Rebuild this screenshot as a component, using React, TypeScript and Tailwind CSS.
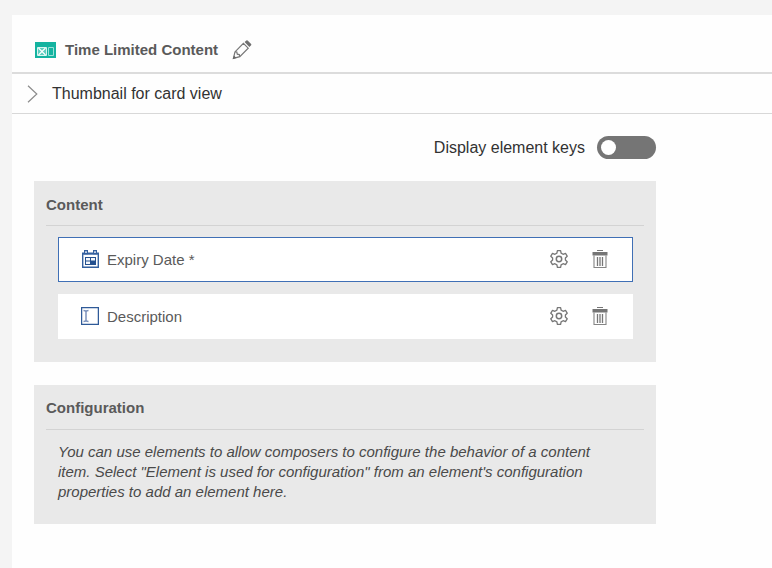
import { useState } from "react";

function CardTypeIcon() {
  return (
    <svg width="21" height="16" viewBox="0 0 21 16" aria-hidden="true">
      <rect width="21" height="16" fill="#14b3a0" />
      <path d="M2.5 5.5h9v8h-9z" fill="#5fcdbf" stroke="#d9f5f0" />
      <path d="m3.5 6 7 7M10.5 6l-7 7" fill="none" stroke="#fff" strokeWidth="1.1" />
      <path d="M13.5 5.5h5v8h-5z" fill="none" stroke="#9be0d7" />
    </svg>
  );
}

function PencilIcon() {
  return (
    <svg width="20" height="20" viewBox="0 0 20 20" fill="none" stroke="#777" aria-hidden="true">
      <path d="M3 11.8 11.4 3.4l4.8 4.8-8.4 8.4L1.4 18.4zM3 11.8l1.8.2.5 2.2 2 .4.5 2" strokeWidth="1.2" />
      <path d="m.8 19 1.2-3.6L4.4 18z" fill="#666" stroke="none" />
      <path d="M12.6 2 14.4.4q.6-.5 1.2.1l3.5 3.5q.5.6 0 1.2L17.4 7z" fill="#6f6f6f" stroke="none" />
    </svg>
  );
}

function ChevronIcon() {
  return (
    <svg width="11" height="18" viewBox="0 0 11 18" fill="none" stroke="#8c8c8c" strokeWidth="1.2" aria-hidden="true">
      <path d="m1 .7 8.8 8.3L1 17.3" />
    </svg>
  );
}

function CalendarIcon() {
  return (
    <svg width="18" height="18" viewBox="0 0 18 18" fill="none" aria-hidden="true">
      <path d="M1.7 3v14.3h15.6V3" stroke="#34609f" strokeWidth="1.4" />
      <path d="M1 2.5h17v2.2H1z" fill="#34609f" />
      <path d="M3.6.6h2.8v3H3.6zM12.6.6h2.8v3h-2.8z" fill="#e8eef8" stroke="#34609f" strokeWidth="1.2" />
      <path d="M4 7h11v8H4z" fill="#24508f" />
      <path d="M5 8h4v2.5H5zM10 8h4v2.5h-4zM5 11.5h4V14H5z" fill="#f4f7fc" />
    </svg>
  );
}

function TextFieldIcon() {
  return (
    <svg width="18" height="18" viewBox="0 0 18 18" fill="none" aria-hidden="true">
      <path d="M.6.6h16.8v16.8H.6z" stroke="#2f5a98" strokeWidth="1.3" />
      <path d="M2.5 3.5q2.5 0 2.5 1.5 0-1.5 2.5-1.5M5 4.5v9M2.5 14.5q2.5 0 2.5-1.5 0 1.5 2.5 1.5" stroke="#7d93bd" strokeWidth="1.5" />
    </svg>
  );
}

function GearIcon() {
  return (
    <svg width="18" height="18" viewBox="0 0 18 18" fill="none" stroke="#777" strokeWidth="1.3" strokeLinejoin="round" aria-hidden="true">
      <path d="M7.4.7h3.2l.5 2.4 2 1.2 2.4-.9 1.7 2.8L15.4 8v2l1.8 1.8-1.7 2.8-2.4-.9-2 1.2-.5 2.4H7.4l-.5-2.4-2-1.2-2.4.9-1.7-2.8L2.6 10V8L.8 6.2l1.7-2.8 2.4.9 2-1.2z" />
      <circle cx="9" cy="9" r="2.7" strokeWidth="1.5" />
    </svg>
  );
}

function TrashIcon() {
  return (
    <svg width="16" height="18" viewBox="0 0 16 18" fill="none" aria-hidden="true">
      <path d="M5 .5h6" stroke="#777" />
      <path d="M.5 2h15v3.5H.5z" fill="#757575" />
      <path d="M2 5.5v12h12v-12" stroke="#858585" strokeWidth="1.1" />
      <path d="M5.5 7v9M8 7v9M10.5 7v9" stroke="#777" strokeWidth="1.3" />
    </svg>
  );
}

type ElementRowProps = {
  name: string;
  icon: React.ReactNode;
  selected?: boolean;
};

function ElementRow({ name, icon, selected = false }: ElementRowProps) {
  return (
    <li
      className={`flex h-[45px] items-center border bg-white pb-px pl-[22px] pr-6 ${
        selected ? "border-[#3f6fb5]" : "border-white"
      }`}
    >
      <span className="flex w-[26px] shrink-0">{icon}</span>
      <span className="flex-1 pt-0.5 text-[15px] leading-5 text-[#5a5a5a]">{name}</span>
      <button type="button" aria-label={`Configure ${name}`} className="mr-6">
        <GearIcon />
      </button>
      <button type="button" aria-label={`Delete ${name}`}>
        <TrashIcon />
      </button>
    </li>
  );
}

export default function App() {
  const [showKeys, setShowKeys] = useState(false);

  return (
    <div className="flex min-h-screen flex-col bg-[#f4f4f4] pl-3 pt-[15px] font-['Liberation_Sans',Arial,sans-serif]">
      <div className="flex-1 bg-[#fefefe]">
        <header className="flex h-[59px] items-center border-b-2 border-[#dcdcdc] pl-[23px] pt-3">
          <CardTypeIcon />
          <h1 className="ml-[9px] mr-3.5 text-[15px] font-bold leading-5 text-[#5a5a5a]">Time Limited Content</h1>
          <button type="button" aria-label="Rename content type">
            <PencilIcon />
          </button>
        </header>

        <button
          type="button"
          aria-expanded="false"
          className="flex h-10 w-full items-center gap-3.5 border-b border-[#d8d8d8] pl-[15px] text-left text-base text-[#323232]"
        >
          <ChevronIcon />
          Thumbnail for card view
        </button>

        <main className="pb-11 pl-[22px] pr-[116px] pt-[22px]">
          <label className="flex items-center justify-end gap-3 text-base leading-5 text-[#323232]">
            Display element keys
            <input
              type="checkbox"
              role="switch"
              checked={showKeys}
              onChange={(event) => setShowKeys(event.target.checked)}
              className="h-[23px] w-[59px] cursor-pointer appearance-none rounded-full bg-[#757575] px-1 py-1 before:block before:size-[15px] before:rounded-full before:bg-white checked:bg-[#3f6fb5] checked:before:ml-auto"
            />
          </label>

          <section className="mt-[22px] bg-[#e9e9e9] px-3 pb-[23px] pt-3.5">
            <h2 className="border-b border-[#d3d3d3] pb-2.5 text-[15px] font-bold leading-5 text-[#5a5a5a]">
              Content
            </h2>
            <ul className="ml-3 mr-[11px] mt-[11px] flex flex-col gap-3">
              <ElementRow name="Expiry Date *" icon={<CalendarIcon />} selected />
              <ElementRow name="Description" icon={<TextFieldIcon />} />
            </ul>
          </section>

          <section className="mt-[23px] bg-[#e9e9e9] px-3 pb-[22px] pt-[13px]">
            <h2 className="border-b border-[#d3d3d3] pb-[11px] text-[15px] font-bold leading-5 text-[#5a5a5a]">
              Configuration
            </h2>
            <p className="ml-3 mr-9 mt-3 text-[15px] italic leading-5 text-[#4a4a4a]">
              You can use elements to allow composers to configure the behavior of a content item. Select "Element is
              used for configuration" from an element's configuration properties to add an element here.
            </p>
          </section>
        </main>
      </div>
    </div>
  );
}
